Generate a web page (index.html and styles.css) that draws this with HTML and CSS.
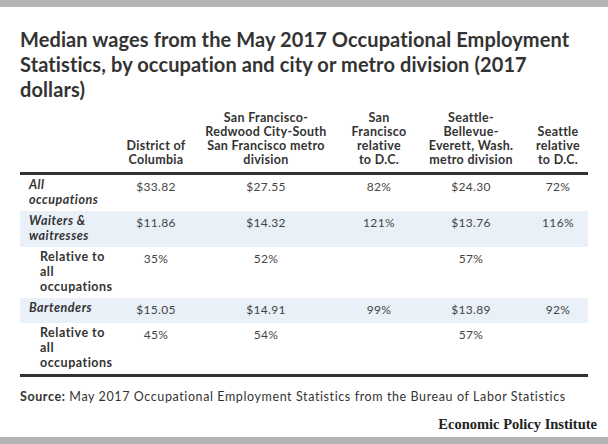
FILE: index.html
```html
<!DOCTYPE html>
<html lang="en">
<head>
<meta charset="utf-8">
<title>Median wages</title>
<link rel="stylesheet" href="styles.css">
</head>
<body>
<div class="page">
  <div class="bar"></div>
  <main class="content">
    <h1 class="title">Median wages from the May 2017 Occupational Employment Statistics, by occupation and city or metro division (2017 dollars)</h1>
    <table class="data">
      <colgroup>
        <col class="c1"><col class="c2"><col class="c3"><col class="c4"><col class="c5"><col class="c6">
      </colgroup>
      <thead>
        <tr>
          <th></th>
          <th>District of<br>Columbia</th>
          <th>San Francisco-<br>Redwood City-South<br>San Francisco metro<br>division</th>
          <th>San<br>Francisco<br>relative<br>to D.C.</th>
          <th>Seattle-<br>Bellevue-<br>Everett, Wash.<br>metro division</th>
          <th>Seattle<br>relative<br>to D.C.</th>
        </tr>
      </thead>
      <tbody>
        <tr>
          <td class="label main">All<br>occupations</td>
          <td>$33.82</td><td>$27.55</td><td>82%</td><td>$24.30</td><td>72%</td>
        </tr>
        <tr class="shade">
          <td class="label main">Waiters &amp;<br>waitresses</td>
          <td>$11.86</td><td>$14.32</td><td>121%</td><td>$13.76</td><td>116%</td>
        </tr>
        <tr>
          <td class="label sub">Relative to<br>all<br>occupations</td>
          <td>35%</td><td>52%</td><td></td><td>57%</td><td></td>
        </tr>
        <tr class="shade">
          <td class="label main">Bartenders</td>
          <td>$15.05</td><td>$14.91</td><td>99%</td><td>$13.89</td><td>92%</td>
        </tr>
        <tr>
          <td class="label sub">Relative to<br>all<br>occupations</td>
          <td>45%</td><td>54%</td><td></td><td>57%</td><td></td>
        </tr>
      </tbody>
    </table>
    <p class="source"><strong>Source:</strong> May 2017 Occupational Employment Statistics from the Bureau of Labor Statistics</p>
    <p class="brand">Economic Policy Institute</p>
  </main>
  <div class="bar"></div>
</div>
</body>
</html>
```

FILE: styles.css
```css
html, body {
  margin: 0;
  padding: 0;
  background: #ffffff;
}

.page {
  width: 608px;
  height: 444px;
  display: flex;
  flex-direction: column;
  font-family: Lato, "Liberation Sans", sans-serif;
  color: #333333;
}

.bar {
  height: 7px;
  background: #b4b4b4;
  flex: none;
}

.content {
  flex: 1;
  padding: 20px 20px 0 20px;
  display: flex;
  flex-direction: column;
}

.title {
  margin: 0;
  font-size: 20px;
  line-height: 25px;
  font-weight: 700;
  letter-spacing: 0.1px;
  color: #333333;
}

.data {
  margin-top: 5px;
  width: 568px;
  border-collapse: collapse;
  table-layout: fixed;
  font-size: 12px;
}

.c1 { width: 104px; }
.c2 { width: 64px; }
.c3 { width: 156px; }
.c4 { width: 70px; }
.c5 { width: 114px; }
.c6 { width: 60px; }

.data th {
  font-size: 12.5px;
  font-weight: 700;
  line-height: 14px;
  letter-spacing: 0.3px;
  text-align: center;
  vertical-align: bottom;
  padding: 4px 0 5px;
  border-bottom: 3px solid #333333;
}

.data td {
  text-align: center;
  vertical-align: top;
  line-height: 19px;
  letter-spacing: 0.35px;
  padding: 2px 2px 4px;
  color: #454545;
}

.data tbody tr:last-child td {
  border-bottom: 3px solid #333333;
}

.data td.label {
  text-align: left;
  font-size: 12.5px;
  line-height: 15px;
  letter-spacing: 0.5px;
  font-weight: 700;
  color: #333333;
}

.data td.main {
  font-style: italic;
  padding-left: 9px;
}

.data td.sub {
  padding-left: 20px;
}

.shade td {
  background: #e9f0f8;
}

.source {
  margin: 12px 0 0;
  font-size: 12.5px;
  line-height: 15px;
  letter-spacing: 0.6px;
}

.source strong {
  font-weight: 700;
}

.brand {
  margin: 12px -9px 0 0;
  font-family: "Liberation Serif", serif;
  font-weight: 700;
  font-size: 14.5px;
  text-align: right;
  color: #222222;
}
```
